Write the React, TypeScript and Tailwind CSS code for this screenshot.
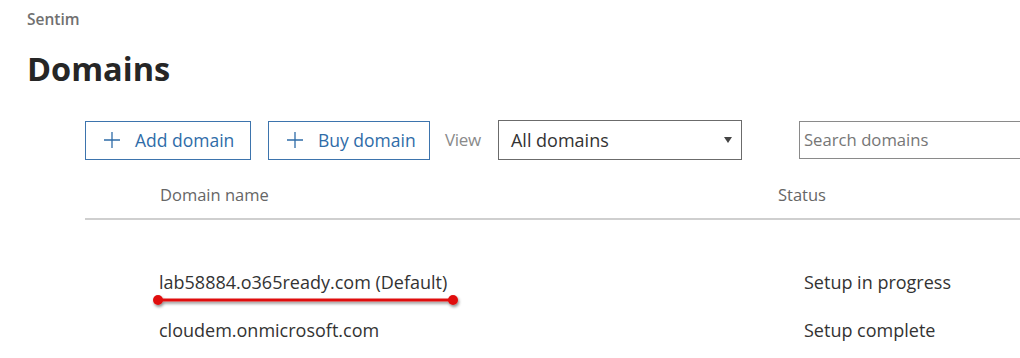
import React from 'react';

const font = { fontFamily: '"Open Sans", "Noto Sans", Arial, sans-serif' };

const PlusIcon = () => (
  <svg width="18" height="18" viewBox="0 0 18 18" className="text-[#2f6ca8]">
    <path d="M9 1v16M1 9h16" stroke="currentColor" strokeWidth="1.3" fill="none" />
  </svg>
);

const OutlineButton = ({ label, width }: { label: string; width: string }) => (
  <button className={`${width} h-[39px] border border-[#3d74ad] bg-white flex items-center pl-[17px] gap-[14px] text-[17.5px] text-[#2f6ca8]`}>
    <PlusIcon />
    <span>{label}</span>
  </button>
);

const App: React.FC = () => {
  return (
    <div className="w-[1020px] h-[358px] bg-white overflow-hidden relative" style={font}>
      {/* Header */}
      <div className="pl-[27px] pt-[9px]">
        <p className="text-[15.5px] font-semibold text-[#707070] leading-[20px]">Sentim</p>
        <h1 className="mt-[20px] text-[32.5px] font-bold text-[#262626] leading-[40px]">Domains</h1>
      </div>

      {/* Toolbar */}
      <div className="flex items-center mt-[31px] pl-[85px]">
        <OutlineButton label="Add domain" width="w-[166px]" />
        <div className="w-[17px]" />
        <OutlineButton label="Buy domain" width="w-[162px]" />
        <span className="ml-[15px] text-[17px] text-[#8a8a8a] tracking-[-0.3px]">View</span>
        <div className="ml-[17px] w-[244px] h-[40px] border border-[#6b6b6b] flex items-center justify-between pl-[12px] pr-[9px]">
          <span className="text-[18px] text-[#333]">All domains</span>
          <svg width="8" height="6" viewBox="0 0 8 6"><path d="M0 0h8L4 6z" fill="#444" /></svg>
        </div>
        <div className="ml-[57px] flex-1 h-[38px] border border-[#8a8a8a] border-r-0 flex items-center pl-[4px]">
          <span className="text-[16.7px] text-[#767676]">Search domains</span>
        </div>
      </div>

      {/* Table header */}
      <div className="ml-[85px] mt-[25px] h-[35px] border-b-2 border-[#cfcfcf] flex items-start text-[16.5px] text-[#666]">
        <span className="w-[693px] pl-[75px] leading-[20px]">Domain name</span>
        <span className="leading-[20px]">Status</span>
      </div>

      {/* Rows */}
      <div className="ml-[159px] mt-[50px] text-[18px] text-[#333]">
        <div className="flex h-[24px] items-center">
          <span className="w-[645px]">lab58884.o365ready.com (Default)</span>
          <span>Setup in progress</span>
        </div>
        <div className="flex h-[24px] items-center mt-[24px]">
          <span className="w-[645px]">cloudem.onmicrosoft.com</span>
          <span>Setup complete</span>
        </div>
      </div>

      {/* Red annotation underline */}
      <svg className="absolute left-[150px] top-[292px]" width="320" height="20" viewBox="0 0 320 20">
        <defs>
          <filter id="sh" x="-10%" y="-100%" width="120%" height="300%">
            <feDropShadow dx="1" dy="2" stdDeviation="1.5" floodColor="#000" floodOpacity="0.45" />
          </filter>
        </defs>
        <g filter="url(#sh)">
          <line x1="8" y1="8" x2="303" y2="8" stroke="#e01010" strokeWidth="3" />
          <circle cx="8" cy="8" r="5" fill="#e01010" />
          <circle cx="303" cy="8" r="5" fill="#e01010" />
        </g>
      </svg>
    </div>
  );
};

export default App;
